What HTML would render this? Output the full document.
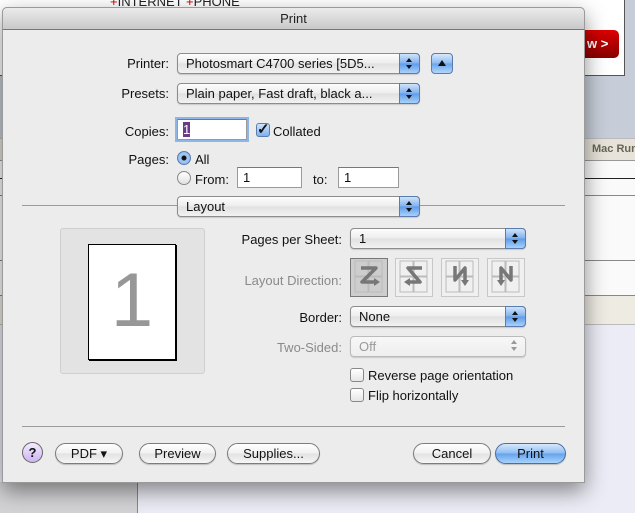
<!DOCTYPE html>
<html><head><style>
*{margin:0;padding:0;box-sizing:border-box}
body{width:635px;height:513px;overflow:hidden;position:relative;font-family:"Liberation Sans",sans-serif;font-size:13px;color:#111;background:#ececf6}
.a{position:absolute}
.lbl{position:absolute;text-align:right;white-space:nowrap}
.dis{color:#8a8a8a}
.pop{position:absolute;height:21px;border:1px solid #8c8c8c;border-radius:4px;background:linear-gradient(#fdfdfd,#ececec 50%,#e0e0e0 51%,#f2f2f2);padding-left:8px;line-height:19px;white-space:nowrap;box-shadow:0 1px 1px rgba(0,0,0,.15)}
.pop .st{position:absolute;right:-1px;top:-1px;width:21px;height:21px;border:1px solid #5a7cae;border-radius:0 4px 4px 0;background:linear-gradient(#cfe3fb,#7fb0ee 50%,#5d9be8 51%,#a9d0fa)}
.st:before{content:"";position:absolute;left:6px;top:4px;border:3.5px solid transparent;border-bottom:4px solid #111;border-top:none}
.st:after{content:"";position:absolute;left:6px;top:11px;border:3.5px solid transparent;border-top:4px solid #111;border-bottom:none}
.pop.d{color:#999;border-color:#bbb;background:linear-gradient(#f7f7f7,#eeeeee)}
.pop.d .st{background:none;border:none}
.pop.d .st:before{border-bottom-color:#999}.pop.d .st:after{border-top-color:#999}
.fld{position:absolute;height:21px;background:#fff;border:1px solid #9a9a9a;border-top-color:#777;padding-left:5px;line-height:19px}
.cb{position:absolute;width:14px;height:14px;border:1px solid #888;border-radius:3px;background:linear-gradient(#fff,#e6e6e6)}
.rd{position:absolute;width:14px;height:14px;border:1px solid #888;border-radius:50%;background:linear-gradient(#fff,#e2e2e2)}
.btn{position:absolute;height:21px;top:443px;border:1px solid #7c7c7c;border-radius:11px;background:linear-gradient(#fff,#f0f0f0 50%,#e2e2e2 51%,#f6f6f6);text-align:center;line-height:19px;box-shadow:0 1px 1px rgba(0,0,0,.2)}
.ld{position:absolute;top:258px;width:38px;height:39px;border:1px solid #c8c8c8;background:#f0f0f0}
</style></head><body>
<div class="a" style="left:0;top:0;width:635px;height:140px;background:#c6cdd8"></div>
<div class="a" style="left:0;top:0;width:625px;height:76px;background:#fff;border-right:1px solid #555;border-bottom:1px solid #555"></div>
<div class="a" style="left:110px;top:-6px;color:#c00;font-size:13px;white-space:nowrap">+<span style="color:#222">INTERNET</span> +<span style="color:#222">PHONE</span></div>
<div class="a" style="left:545px;top:30px;width:74px;height:28px;border-radius:5px;background:linear-gradient(#d00,#800);color:#fff;font-weight:bold;line-height:28px;padding-left:42px">w &gt;</div>
<div class="a" style="left:0;top:138px;width:635px;height:23px;background:#e7e3da;border-top:1px solid #bbb;border-bottom:1px solid #999"></div>
<div class="a" style="left:592px;top:143px;font-weight:bold;color:#665;font-size:11px;white-space:nowrap">Mac Run</div>
<div class="a" style="left:0;top:161px;width:635px;height:134px;background:#fafafa"></div>
<div class="a" style="left:0;top:178px;width:635px;height:1px;background:#222"></div>
<div class="a" style="left:0;top:195px;width:635px;height:1px;background:#888"></div>
<div class="a" style="left:0;top:260px;width:635px;height:1px;background:#888"></div>
<div class="a" style="left:0;top:295px;width:635px;height:30px;background:#eeebe3;border-top:1px solid #888;border-bottom:1px solid #bbb"></div>
<div class="a" style="left:0;top:482px;width:138px;height:31px;background:#d3d3d6;border-right:1px solid #888"></div>

<div class="a" style="left:2px;top:7px;width:583px;height:476px;background:#ececec;border:1px solid #9a9a9a;border-radius:5px 5px 0 0;box-shadow:0 8px 22px rgba(0,0,0,.45)"></div>
<div class="a" style="left:2px;top:7px;width:583px;height:23px;background:linear-gradient(#ebebeb,#c9c9c9);border:1px solid #9a9a9a;border-bottom-color:#777;border-radius:5px 5px 0 0;text-align:center;line-height:22px;color:#222">Print</div>

<div class="lbl" style="right:466px;top:56px">Printer:</div>
<div class="pop" style="left:177px;top:53px;width:243px">Photosmart C4700 series [5D5...<span class="st"></span></div>
<div class="a" style="left:431px;top:53px;width:22px;height:21px;border:1px solid #5a7cae;border-radius:4px;background:linear-gradient(#d8e9fc,#8cbaf0 50%,#6aa4ea 51%,#b4d6fb)"><div class="a" style="left:6px;top:6px;border:4px solid transparent;border-bottom:6px solid #111;border-top:none"></div></div>
<div class="lbl" style="right:466px;top:86px">Presets:</div>
<div class="pop" style="left:177px;top:83px;width:243px">Plain paper, Fast draft, black a...<span class="st"></span></div>

<div class="lbl" style="right:466px;top:124px">Copies:</div>
<div class="fld" style="left:177px;top:119px;width:70px;box-shadow:0 0 0 2px #8db6e6"><span style="background:#6a3b86;color:#fff">1</span></div>
<div class="cb" style="left:256px;top:123px;border-color:#5a7cae;background:linear-gradient(#cfe3fb,#7fb0ee)"><span class="a" style="left:0;top:-4px;font-size:15px;font-weight:bold">✓</span></div>
<div class="a" style="left:273px;top:124px">Collated</div>
<div class="lbl" style="right:466px;top:152px">Pages:</div>
<div class="rd" style="left:177px;top:151px;border-color:#5a7cae;background:radial-gradient(#111 2px,#a6cbf5 3px,#7fb0ee)"></div>
<div class="a" style="left:195px;top:152px">All</div>
<div class="rd" style="left:177px;top:171px"></div>
<div class="a" style="left:195px;top:172px">From:</div>
<div class="fld" style="left:237px;top:167px;width:65px">1</div>
<div class="a" style="left:313px;top:172px">to:</div>
<div class="fld" style="left:338px;top:167px;width:61px">1</div>

<div class="a" style="left:22px;top:205px;width:543px;height:1px;background:#9a9a9a"></div>
<div class="pop" style="left:177px;top:196px;width:243px">Layout<span class="st"></span></div>

<div class="a" style="left:60px;top:228px;width:145px;height:146px;background:#e3e3e3;border:1px solid #cfcfcf;border-radius:3px"></div>
<div class="a" style="left:88px;top:244px;width:88px;height:116px;background:#fff;border:1px solid #000;box-shadow:1px 1px 0 #000;text-align:center;font-size:76px;line-height:112px;color:#979797">1</div>

<div class="lbl" style="right:293px;top:232px">Pages per Sheet:</div>
<div class="pop" style="left:350px;top:228px;width:176px">1<span class="st"></span></div>
<div class="lbl dis" style="right:293px;top:273px">Layout Direction:</div>
<div class="ld" style="left:350px;background:#cdcdcd;border-color:#777"></div>
<div class="ld" style="left:395px"></div>
<div class="ld" style="left:441px"></div>
<div class="ld" style="left:487px"></div>
<svg class="a" style="left:350px;top:258px" width="180" height="40">
<g fill="none" stroke="#bbb"><rect x="5" y="3" width="13" height="15"/><rect x="19" y="3" width="13" height="15"/><rect x="5" y="19" width="13" height="15"/><rect x="19" y="19" width="13" height="15"/>
<rect x="50" y="3" width="13" height="15"/><rect x="64" y="3" width="13" height="15"/><rect x="50" y="19" width="13" height="15"/><rect x="64" y="19" width="13" height="15"/>
<rect x="96" y="3" width="13" height="15"/><rect x="110" y="3" width="13" height="15"/><rect x="96" y="19" width="13" height="15"/><rect x="110" y="19" width="13" height="15"/>
<rect x="142" y="3" width="13" height="15"/><rect x="156" y="3" width="13" height="15"/><rect x="142" y="19" width="13" height="15"/><rect x="156" y="19" width="13" height="15"/></g>
<g fill="none" stroke="#777" stroke-width="3.5" stroke-linejoin="round">
<path d="M11 10H26L12 24H24"/>
<path d="M72 10H58L70 24H59"/>
<path d="M105 8V22L115 10V24"/>
<path d="M151 24V10L161 22V8"/></g>
<g fill="#777"><path d="M24 20l6 4-6 4z"/><path d="M60 20l-6 4 6 4z"/><path d="M111 22l4 6 4-6z"/><path d="M147 22l4 6 4-6z"/></g>
</svg>
<div class="lbl" style="right:293px;top:310px">Border:</div>
<div class="pop" style="left:350px;top:306px;width:176px">None<span class="st"></span></div>
<div class="lbl dis" style="right:293px;top:340px">Two-Sided:</div>
<div class="pop d" style="left:350px;top:336px;width:176px">Off<span class="st"></span></div>
<div class="cb" style="left:350px;top:368px"></div><div class="a" style="left:368px;top:368px">Reverse page orientation</div>
<div class="cb" style="left:350px;top:388px"></div><div class="a" style="left:368px;top:388px">Flip horizontally</div>

<div class="a" style="left:22px;top:426px;width:543px;height:1px;background:#9a9a9a"></div>
<div class="a" style="left:22px;top:442px;width:21px;height:21px;border-radius:50%;border:1px solid #666;background:linear-gradient(#f4ecff,#cbb4f0);text-align:center;line-height:19px;font-weight:bold">?</div>
<div class="btn" style="left:55px;width:68px">PDF ▾</div>
<div class="btn" style="left:139px;width:77px">Preview</div>
<div class="btn" style="left:227px;width:93px">Supplies...</div>
<div class="btn" style="left:413px;width:78px">Cancel</div>
<div class="btn" style="left:495px;width:71px;border-color:#4a6fa8;background:linear-gradient(#d6e8fd,#8dbcf2 50%,#64a2ec 51%,#a9d2fb)">Print</div>
</body></html>
